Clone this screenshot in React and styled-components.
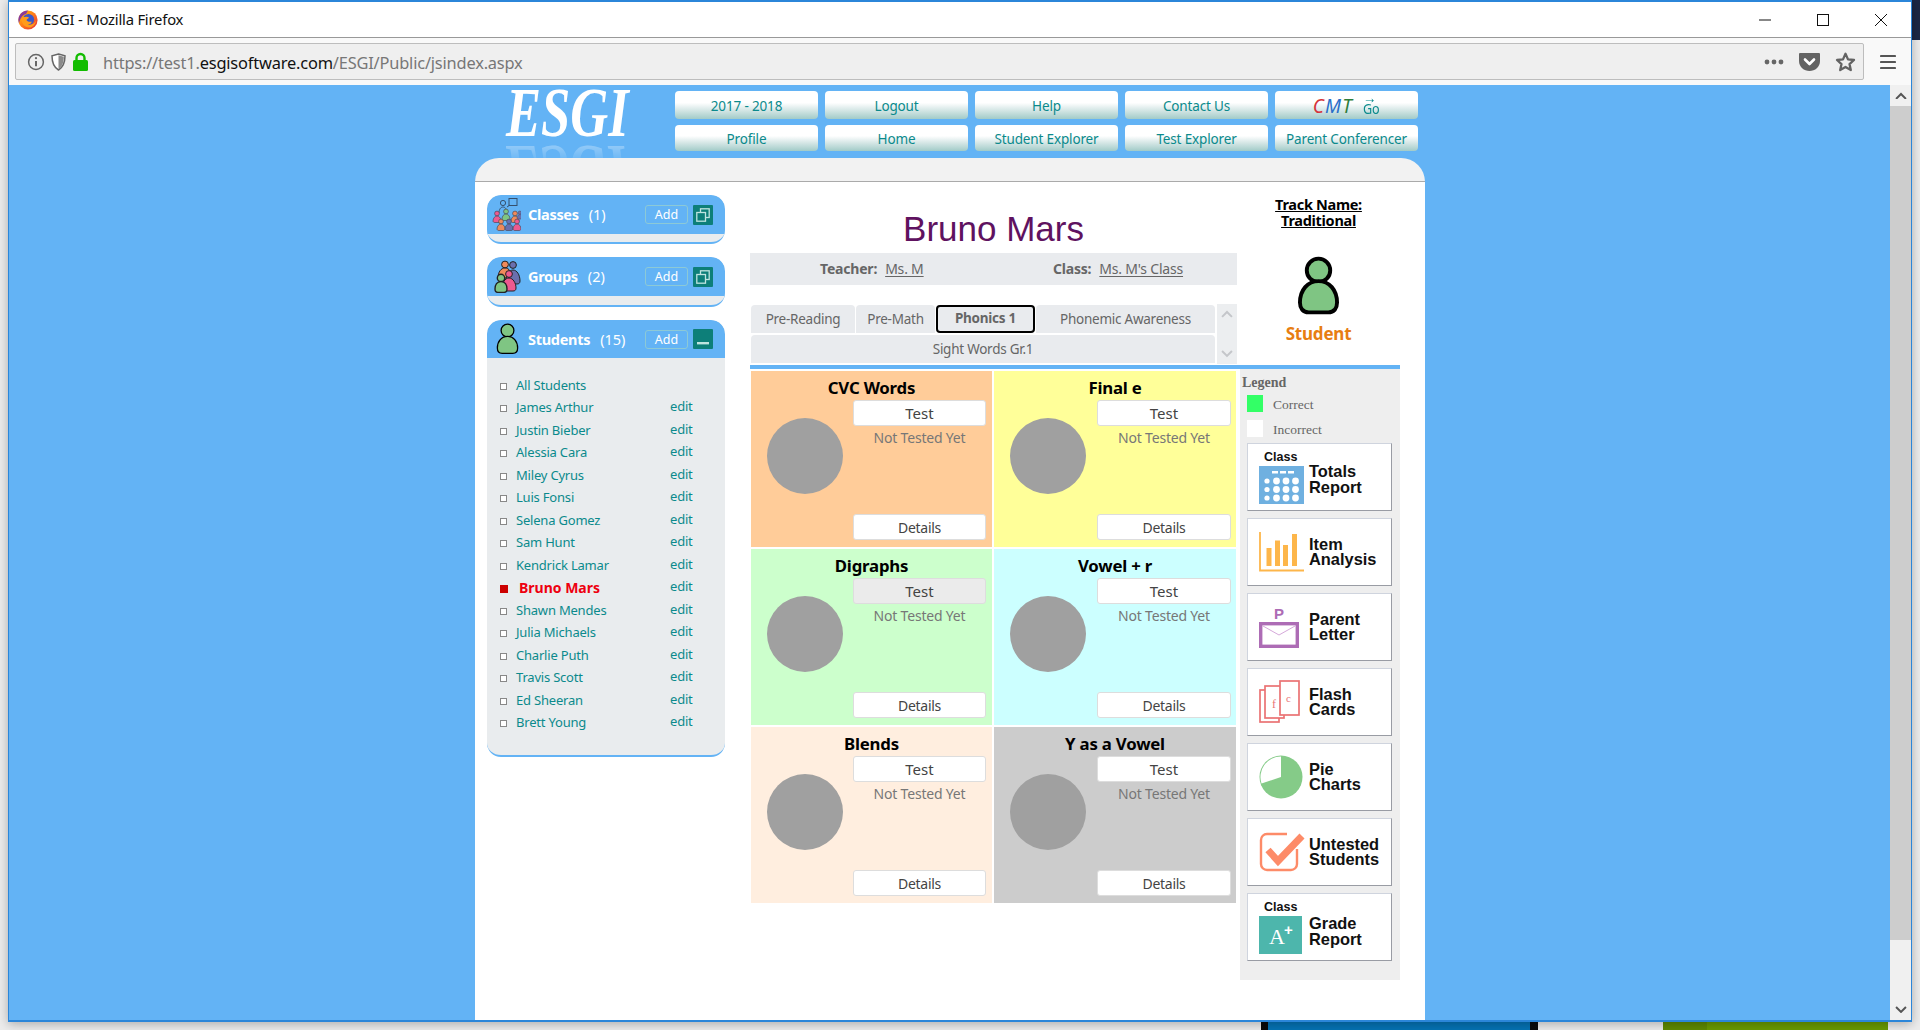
import React from 'react';
import styled, { createGlobalStyle } from 'styled-components';

const Global = createGlobalStyle`
  html, body { margin: 0; padding: 0; overflow: hidden; background: #ececec; }
  * { box-sizing: border-box; }
`;
const UI = `"Noto Sans", "Liberation Sans", sans-serif`;
const TAHOMA = `"Noto Sans", "Liberation Sans", sans-serif`;
const HELV = `"Liberation Sans", Arial, sans-serif`;
const SERIF = `"Liberation Serif", "Times New Roman", serif`;
const BLUE = '#63b3f5';
const TEAL = '#0b8a8c';

const Desktop = styled.div`
  position: relative; width: 1920px; height: 1030px; background: #ececec; overflow: hidden;
`;
const BackPiece = styled.div`
  position: absolute; bottom: 0; height: 9px; left: ${p => p.$x}px; width: ${p => p.$w}px; background: ${p => p.$c};
`;
const CornerPiece = styled.div`
  position: absolute; top: 0; right: 0; width: 8px; height: 40px; background: #1b2745;
`;
const Window = styled.div`
  position: absolute; left: 8px; top: 0; width: 1904px; height: 1022px;
  display: flex; flex-direction: column;
  border: 1px solid #2b86d9; border-width: 2px 1px 2px 1px;
  box-shadow: 0 2px 10px rgba(0,0,0,.28);
`;
const TitleBar = styled.div`
  height: 36px; flex: none; background: #fff; display: flex; align-items: center; padding-left: 9px;
  border-bottom: 1px solid #999; position: relative; z-index: 2;
`;
const TitleText = styled.div`
  font: 14.8px/1 ${UI}; color: #111; margin-left: 5px; letter-spacing: -.2px;
`;
const WinButtons = styled.div`
  margin-left: auto; display: flex; align-items: center; gap: 46px; padding-right: 24px;
`;
const Toolbar = styled.div`
  height: 47px; flex: none; background: #f9f9f9; display: flex; align-items: center; padding: 0 15px 0 6px; position: relative; z-index: 2;
`;
const UrlBar = styled.div`
  width: 1849px; height: 37px; background: #efefef; border: 1px solid #bdbdbd; border-radius: 2px;
  display: flex; align-items: center; padding: 0 7px 0 11px;
`;
const UrlIcons = styled.div`display: flex; align-items: center; gap: 6px; width: 76px;`;
const Url = styled.div`
  font: 16.4px/1 ${UI}; color: #777; letter-spacing: -.18px; white-space: nowrap; padding-top: 4px; b { font-weight: 400; color: #111; }
`;
const UrlEnd = styled.div`margin-left: auto; display: flex; align-items: center; gap: 15px;`;
const MenuSlot = styled.span`margin-left: auto; display: flex;`;
const Viewport = styled.div`flex: 1; min-height: 0; display: flex;`;
const Page = styled.div`
  flex: 1; background: ${BLUE}; padding-left: 466px; display: flex; flex-direction: column;
`;
const Scrollbar = styled.div`
  width: 21px; flex: none; background: #f0f0f0; display: flex; flex-direction: column; align-items: center; position: relative;
`;
const ScrollBtn = styled.div`height: 21px; flex: none; display: flex; align-items: center; justify-content: center; margin-top: ${p => p.$end ? 'auto' : '0'};`;
const ScrollThumb = styled.div`width: 100%; height: 834px; background: #cdcdcd;`;

const Header = styled.div`height: 73px; flex: none; display: flex; width: 950px;`;
const LogoBox = styled.div`
  width: 200px; padding: 0 0 0 31px;
`;
const Logo = styled.div`
  font: italic 700 70px/56px ${SERIF}; color: #fff; height: 56px; width: 160px; white-space: nowrap;
  transform: scaleX(.75); transform-origin: left;
  -webkit-box-reflect: below 0px linear-gradient(transparent 60%, rgba(255,255,255,.38));
`;
const NavGrid = styled.div`
  display: grid; grid-template-columns: repeat(5, 143px); grid-template-rows: 28px 26px; column-gap: 7px; row-gap: 6px; padding-top: 6px;
`;
const NavBtn = styled.div`
  border-radius: 4px; display: flex; align-items: center; justify-content: center; gap: 9px; padding-top: 3px;
  background: linear-gradient(#fff 0%, #fff 42%, #d6e7e6 68%, #a2cbc8 100%);
  font: 13.5px/1 ${TAHOMA}; color: ${TEAL}; letter-spacing: -.15px;
`;
const Cmt = styled.span`
  font: italic 400 19px/1 ${UI}; letter-spacing: 1.2px; color: #2f7d3a;
  i:nth-child(1) { color: #d6333a; } i:nth-child(2) { color: #2a6fc9; }
`;
const Go = styled.span`
  font: 14px/1 ${TAHOMA}; color: ${TEAL}; position: relative; padding-top: 5px; transform: scaleX(.9);
  &::before { content: "→"; position: absolute; top: -7px; left: 0; font-size: 15px; }
`;
const Sheet = styled.div`width: 950px; flex: 1; display: flex; flex-direction: column; position: relative; z-index: 1;`;
const SheetTop = styled.div`
  height: 24px; flex: none; background: #f2f2f2; border-bottom: 1px solid #aaa; border-radius: 24px 24px 0 0;
`;
const SheetBody = styled.div`flex: 1; display: flex; min-height: 0; background: #fff;`;

const Side = styled.div`width: 275px; flex: none; padding: 13px 0 0 12px;`;
const Panel = styled.div`
  width: 238px; margin-bottom: ${p => p.$mb}px; background: #e9ecee; border-radius: 14px; border-bottom: 2px solid ${BLUE}; overflow: hidden;
  height: ${p => p.$h}px;
`;
const PanelHead = styled.div`
  height: ${p => p.$h || 39}px; background: ${BLUE}; display: flex; align-items: center; position: relative;
  border-radius: 14px 14px 0 0;
`;
const PanelIcon = styled.div`width: 41px; flex: none; display: flex; justify-content: center;`;
const PanelTitle = styled.div`
  font: 700 14.5px/1 ${TAHOMA}; color: #fff; letter-spacing: -.3px; span { font-weight: 400; margin-left: 10px; letter-spacing: 0; }
`;
const AddBtn = styled.div`
  margin-left: auto; width: 43px; height: 19px; border: 1px solid #8cc9d6; border-radius: 3px; color: #fff;
  font: 12.5px/17px ${TAHOMA}; text-align: center;
`;
const ToggleBtn = styled.div`
  width: 20px; height: 20px; margin: 0 12px 0 5px; background: #0d7f79; display: flex; align-items: center; justify-content: center; border-radius: 1px;
`;
const StudentList = styled.ul`list-style: none; margin: 0; padding: 16px 0 0 13px;`;
const StudentRow = styled.li`
  height: 22.5px; display: flex; align-items: center; font: 13px/1 ${TAHOMA}; letter-spacing: -.2px; color: ${TEAL};
`;
const Bullet = styled.span`
  width: 7px; height: 7px; flex: none; border: 1.5px solid #888; background: #fff; margin: 2px 9px 0 0;
`;
const ActiveBullet = styled.span`width: 8px; height: 8px; flex: none; background: #cc0000; margin: 2px 11px 0 0;`;
const ActiveName = styled.span`font-weight: 700; font-size: 14px; letter-spacing: 0; color: #ee0010;`;
const EditSlot = styled.span`margin-left: auto; width: 55px; transform: translateY(-1px);`;

const Center = styled.div`width: 487px; flex: none; display: flex; flex-direction: column;`;
const StudentName = styled.h1`
  margin: 0; height: 71px; padding-top: 29px; text-align: center; font: 400 35px/1 ${HELV}; color: #5f1260;
`;
const InfoBar = styled.div`
  height: 32px; flex: none; background: #e9ebee; display: flex; align-items: center; padding-left: 70px;
  font: 14px/1 ${TAHOMA}; color: #666; letter-spacing: -.2px;
`;
const InfoItem = styled.div`
  flex: none; width: 233px; white-space: nowrap; b { font-weight: 700; margin-right: 8px; } u { text-underline-offset: 2px; }
`;
const TabsWrap = styled.div`display: flex; margin-top: 19px; height: 61px; flex: none;`;
const TabRows = styled.div`width: 467px; padding: 1px 2px 0 1px; display: flex; flex-direction: column; gap: 2px;`;
const TabRow = styled.div`display: flex; gap: 1px; height: 28px;`;
const Tab = styled.div`
  flex: ${p => p.$w ? `0 0 ${p.$w}px` : 1}; background: #e9ebee; color: #666; padding-top: ${p => p.$on ? 0 : 2}px;
  display: flex; align-items: center; justify-content: center; font: ${p => p.$on ? 700 : 400} 13.5px/1 ${TAHOMA}; letter-spacing: -.25px;
  border: ${p => p.$on ? '2px solid #000' : 'none'};
  border-radius: ${p => p.$on ? '4px' : '4px 4px 0 0'};
`;
const TabScroll = styled.div`
  width: 20px; background: #eceef0; display: flex; flex-direction: column; justify-content: space-between; align-items: center; padding: 6px 0; height: 60px;
`;
const TilesBar = styled.div`height: 4px; flex: none; background: ${BLUE};`;
const Tiles = styled.div`
  display: grid; grid-template-columns: 241px 242px; grid-auto-rows: 176px; gap: 2px; padding: 2px 0 0 1px;
`;
const TileBox = styled.div`
  background: ${p => p.$bg}; display: grid;
  grid-template-columns: ${p => p.$right ? '103px 134px' : '102px 133px'};
  grid-template-rows: 29px 26px 1fr 26px; padding-bottom: 7px;
`;
const TileTitle = styled.div`
  grid-column: 1 / 3; font: 700 16.8px/1 ${TAHOMA}; color: #000; text-align: center; padding-top: 9px; letter-spacing: -.2px; margin-right: ${p => p.$right ? -5 : -6}px; white-space: nowrap;
`;
const Dial = styled.div`
  grid-column: 1; grid-row: 2 / 4; width: 76px; height: 76px; border-radius: 50%; background: #a0a0a0; margin: 18px 0 0 16px;
`;
const TileBtn = styled.div`
  grid-column: 2; grid-row: ${p => p.$row}; background: ${p => p.$bg || '#fff'}; border: 1px solid #ddd; border-radius: 3px; display: flex; align-items: center; justify-content: center;
  padding-top: 1px; font: ${p => p.$fs}px/1 ${TAHOMA}; color: #444; letter-spacing: ${p => p.$ls || 0}px;
`;
const NotTested = styled.div`
  grid-column: 2; grid-row: 3; text-align: center; font: 14px/1 ${TAHOMA}; color: #777; padding: 5px 0 0 0; letter-spacing: -.2px; white-space: nowrap;
`;

const Right = styled.div`flex: none; width: 163px; margin-left: 3px; display: flex; flex-direction: column;`;
const Track = styled.div`
  height: 183px; flex: none; display: flex; flex-direction: column; align-items: center; width: 157px;
`;
const TrackName = styled.div`
  font: 700 14.5px/16px ${TAHOMA}; color: #000; text-decoration: underline; text-align: center; letter-spacing: -.3px; margin-top: 14px;
`;
const Figure = styled.div`margin-top: 28px; height: 60px;`;
const Role = styled.div`font: 700 17px/1 ${TAHOMA}; color: #e77e12; margin-top: 9px; letter-spacing: -.2px;`;
const BlueCap = styled.div`height: 4px; flex: none; background: ${BLUE}; margin-left: -3px; width: 163px;`;
const LegendBox = styled.div`
  width: 160px; height: 611px; background: #eee; padding: 6px 7px 0 2px; display: flex; flex-direction: column;
`;
const LegendHead = styled.div`font: 700 14px/16px ${SERIF}; color: #666;`;
const LegendItem = styled.div`
  display: flex; align-items: center; height: 25px; padding-left: 5px; font: 13.5px/1 ${SERIF}; color: #666; &:first-of-type { margin-top: 5px; }
`;
const LegendText = styled.span`padding-top: 3px;`;
const Swatch = styled.span`width: 16px; height: 17px; background: ${p => p.$c}; margin-right: 10px;`;
const Reports = styled.div`display: flex; flex-direction: column; gap: 7px; padding: 2px 0 0 5px;`;
const Report = styled.div`
  width: 145px; height: 68px; background: #fff; border: 1px solid; border-color: #cfd4de #999ca4 #999ca4 #cfd4de;
  display: flex; align-items: center; padding-left: 11px; position: relative;
`;
const ReportIcon = styled.div`width: 50px; flex: none; display: flex; align-items: center; height: 100%;`;
const ReportLabel = styled.div`
  font: 700 16.4px/15.5px ${HELV}; color: #111; margin-top: ${p => p.$mt || 0}px; white-space: pre-line;
`;
const ClassTag = styled.div`
  position: absolute; left: 16px; top: 7px; font: 700 12.5px/1 ${HELV}; color: #111;
`;

const FirefoxIcon = () => (
  <svg width="20" height="20" viewBox="0 0 20 20">
    <defs>
      <linearGradient id="ff" x1="0" y1="0" x2="1" y2="1"><stop offset="0" stopColor="#ffcb00"/><stop offset=".5" stopColor="#ff7a1a"/><stop offset="1" stopColor="#e32a3a"/></linearGradient>
    </defs>
    <circle cx="10" cy="10" r="9.6" fill="url(#ff)"/>
    <path d="M10 .4a9.6 9.600 0 0 0-9 13C2 9 4 5 8 4z" fill="#8a3a9a"/>
    <circle cx="10.500" cy="9.500" r="5.600" fill="#3a58c9"/>
    <path d="M3 9c1 5 4 9 9 8.500 3-.5 5.500-3 6-7-1.500 3.500-5 5-8 4 2.500-.5 4-1.500 3.500-3-2 .8-4.500 0-5-1.500 1-1.500 2.500-1.500 2.500-2.500-1.500-1-3-1-4-.5C5 7 3.500 7.500 3 9z" fill="#ff9c1a"/>
  </svg>
);
const Info = () => (
  <svg width="18" height="18" viewBox="0 0 18 18" fill="none" stroke="#666" strokeWidth="1.5">
    <circle cx="9" cy="9" r="7.4"/><path d="M9 8v5.2" strokeWidth="2"/><circle cx="9" cy="5.2" r="1.1" fill="#666" stroke="none"/>
  </svg>
);
const Shield = () => (
  <svg width="15" height="18" viewBox="0 0 15 18">
    <path d="M7.5 1 14 2.8c0 6-1 11-6.500 14.200C2 14 1 8.800 1 2.800z" fill="#fff" stroke="#666" strokeWidth="1.500"/>
    <path d="M7.500 2.200 12.800 3.700c0 5-1 9.500-5.300 12z" fill="#8a8a8a"/>
  </svg>
);
const Lock = () => (
  <svg width="17" height="19" viewBox="0 0 17 19">
    <path d="M4.500 9V6a4 4 0 0 1 8 0v3" fill="none" stroke="#12bc00" strokeWidth="2.400"/>
    <rect x="1" y="8" width="15" height="11" rx="1.500" fill="#12bc00"/>
  </svg>
);
const Dots = () => (
  <svg width="20" height="6" viewBox="0 0 20 6" fill="#666"><circle cx="3" cy="3" r="2.400"/><circle cx="10" cy="3" r="2.400"/><circle cx="17" cy="3" r="2.400"/></svg>
);
const Pocket = () => (
  <svg width="21" height="18" viewBox="0 0 21 18">
    <path d="M1 0h19a1 1 0 0 1 1 1v7c0 6-5 10-10.500 10S0 14 0 8V1a1 1 0 0 1 1-1z" fill="#636363"/>
    <path d="M6 6.500 10.500 11 15 6.500" fill="none" stroke="#fff" strokeWidth="2.600" strokeLinecap="round" strokeLinejoin="round"/>
  </svg>
);
const Star = () => (
  <svg width="21" height="20" viewBox="0 0 21 20">
    <path d="M10.500 1.800 13 7.400l6 .6-4.500 4.100 1.300 6-5.300-3.100-5.300 3.100 1.300-6L2 8l6-.6z" fill="none" stroke="#636363" strokeWidth="2.300" strokeLinejoin="round"/>
  </svg>
);
const Menu = () => (
  <svg width="16" height="16" viewBox="0 0 16 16" stroke="#555" strokeWidth="2.200" strokeLinecap="round"><path d="M1 2h14M1 8h14M1 14h14"/></svg>
);
const Chevron = ({ up, color = '#555', size = 12 }) => (
  <svg width={size} height={size * .66} viewBox="0 0 12 8" fill="none" stroke={color} strokeWidth="2">
    <path d={up ? 'M1 7 6 2l5 5' : 'M1 1l5 5 5-5'}/>
  </svg>
);

const Person = ({ w, h, fill = '#7fc583', stroke = 3 }) => (
  <svg width={w} height={h} viewBox="0 0 42 60">
    <circle cx="21" cy="14" r="12" fill={fill} stroke="#000" strokeWidth={stroke + 1}/>
    <path d="M21 25c-11 0-19 9-19 22 0 6 3 10 9 10h20c6 0 9-4 9-10 0-13-8-22-19-22z" fill={fill} stroke="#000" strokeWidth={stroke + 1}/>
  </svg>
);
const mini = (x, y, c, s = 1) => (
  <g key={`${x}-${y}`} transform={`translate(${x} ${y}) scale(${s})`}>
    <circle cx="4" cy="2.500" r="2.400" fill={c} stroke="#4a4a5a" strokeWidth=".7"/>
    <path d="M0 10c0-3 2-5 4-5s4 2 4 5c0 1-1 1.500-2 1.500H2c-1 0-2-.5-2-1.500z" fill={c} stroke="#4a4a5a" strokeWidth=".7"/>
  </g>
);
const ClassesIcon = () => (
  <svg width="30" height="33" viewBox="0 0 30 33" style={{ marginLeft: -4 }}>
    <rect x="18" y="0.500" width="8" height="7" fill="none" stroke="#35506e"/>
    <path d="M16 9l3-2" stroke="#35506e"/>
    <circle cx="12" cy="5" r="2.600" fill="none" stroke="#35506e"/>
    <path d="M8 15c0-4 2-6 4-6s4 2 4 6" fill="none" stroke="#35506e"/>
    {mini(11, 11, '#7fc583')}{mini(2, 13, '#ee5a8f')}{mini(20, 13, '#f08a5a')}
    {mini(26, 13, '#6a6fae', .7)}{mini(6, 21, '#f08a5a')}{mini(14, 21, '#6a6fae')}{mini(22, 21, '#ee5a8f')}
  </svg>
);
const GroupsIcon = () => (
  <svg width="27" height="33" viewBox="0 0 27 33" stroke="#222" strokeWidth="1">
    <circle cx="11" cy="4.500" r="3.400" fill="#f08a5a"/>
    <path d="M4 18c0-6 3-10 7-10s7 4 7 10z" fill="#f08a5a"/>
    <circle cx="19" cy="5" r="3.400" fill="#6a6fae"/>
    <path d="M12 21c0-6 3-11 7-11s7 5 7 11c0 2-1 3-3 3h-8c-2 0-3-1-3-3z" fill="#6a6fae"/>
    <circle cx="15" cy="14" r="3.400" fill="#ee5a8f"/>
    <path d="M8 28c0-5 3-10 7-10s7 5 7 10c0 2-1 3-3 3h-8c-2 0-3-1-3-3z" fill="#ee5a8f"/>
    <circle cx="7" cy="18" r="3.700" fill="#7fc583" strokeWidth="1.400"/>
    <path d="M1 29c0-4 2-7.500 6-7.500s6 3.500 6 7.500c0 2-1 3.400-3 3.400H4c-2 0-3-1.400-3-3.400z" fill="#7fc583" strokeWidth="1.400"/>
  </svg>
);
const Overlap = () => (
  <svg width="14" height="14" viewBox="0 0 14 14" fill="none" stroke="#bfe4e0" strokeWidth="1.300">
    <rect x="4.500" y=".8" width="8.700" height="8.700"/><rect x=".8" y="4.500" width="8.700" height="8.700" fill="#0d7f79"/>
  </svg>
);
const Minus = () => (
  <svg width="14" height="14" viewBox="0 0 14 14"><rect x="1" y="10" width="12" height="2.400" fill="#bfe4e0"/></svg>
);

const TotalsIcon = () => (
  <svg width="46" height="38" viewBox="0 0 46 38" style={{ marginTop: 15 }}>
    <rect width="45" height="38" fill="#6fb0e0"/>
    {[0, 1, 2].map(i => <rect key={i} x={13 + i * 8} y="5" width="6" height="2.500" fill="#fff"/>)}
    {[0, 1, 2].map(r => [0, 1, 2, 3].map(c => <circle key={`${r}${c}`} cx={8 + c * 9.500} cy={15 + r * 8.500} r={c === 0 ? 2.600 : 3.400} fill="#fff"/>))}
  </svg>
);
const ItemIcon = () => (
  <svg width="45" height="40" viewBox="0 0 45 40" fill="#fdb64a">
    <path d="M1 0v38.500h44" fill="none" stroke="#fdb64a" strokeWidth="1.800"/>
    <rect x="7.500" y="16" width="5" height="18"/><rect x="16" y="8.500" width="5" height="25.500"/><rect x="24" y="13" width="5" height="21"/><rect x="33" y="2" width="5" height="32"/>
  </svg>
);
const LetterIcon = () => (
  <svg width="40" height="42" viewBox="0 0 40 42">
    <text x="15" y="13" fontFamily={HELV} fontSize="15" fontWeight="700" fill="#ad6cb5">P</text>
    <rect x="1.700" y="17.700" width="36.600" height="22.600" fill="#fff" stroke="#ad6cb5" strokeWidth="3.400"/>
    <path d="M4 20l16 9 16-9" fill="none" stroke="#d5a8da" strokeWidth="1"/>
  </svg>
);
const CardsIcon = () => (
  <svg width="42" height="44" viewBox="0 0 42 44" fill="#fff" stroke="#ea7374" strokeWidth="1.700">
    <rect x="1" y="10" width="19" height="32"/><rect x="6" y="6" width="19" height="32"/><rect x="21" y="1" width="19" height="34"/>
    <text x="13" y="28" fontFamily={SERIF} fontSize="12" fill="#ea7374" stroke="none">f</text>
    <text x="27" y="22" fontFamily={SERIF} fontSize="11" fill="#ea7374" stroke="none">c</text>
  </svg>
);
const PieIcon = () => (
  <svg width="44" height="44" viewBox="0 0 44 44">
    <circle cx="22" cy="22" r="21.500" fill="#85cb88"/>
    <path d="M22 22V1.500A20.500 20.500 0 0 0 2.500 28.500z" fill="#fff"/>
  </svg>
);
const CheckIcon = () => (
  <svg width="46" height="40" viewBox="0 0 46 40" fill="none">
    <path d="M28 2H8a6 6 0 0 0-6 6v24a6 6 0 0 0 6 6h24a6 6 0 0 0 6-6V17" stroke="#fd8b68" strokeWidth="2.400"/>
    <path d="M9 18l10 11L43 4" stroke="#fd8b68" strokeWidth="7"/>
  </svg>
);
const GradeIcon = () => (
  <svg width="44" height="38" viewBox="0 0 44 38" style={{ marginTop: 15 }}>
    <rect width="43" height="38" fill="#4db6ac"/>
    <text x="10" y="28" fontFamily={SERIF} fontSize="22" fill="#fff">A</text>
    <text x="25" y="19" fontFamily={HELV} fontSize="15" fontWeight="700" fill="#fff">+</text>
  </svg>
);

const students = ['James Arthur','Justin Bieber','Alessia Cara','Miley Cyrus','Luis Fonsi','Selena Gomez','Sam Hunt','Kendrick Lamar','Bruno Mars','Shawn Mendes','Julia Michaels','Charlie Puth','Travis Scott','Ed Sheeran','Brett Young'];
const nav = ['2017 - 2018','Logout','Help','Contact Us',null,'Profile','Home','Student Explorer','Test Explorer','Parent Conferencer'];
const tiles = [
  ['CVC Words','#ffcc99'],['Final e','#ffff99'],['Digraphs','#ccffcc'],['Vowel + r','#ccffff'],['Blends','#ffeedf'],['Y as a Vowel','#cccccc'],
];
const reports = [
  [TotalsIcon,'Totals\nReport',true,5],[ItemIcon,'Item\nAnalysis'],[LetterIcon,'Parent\nLetter'],[CardsIcon,'Flash\nCards'],[PieIcon,'Pie\nCharts'],[CheckIcon,'Untested\nStudents'],[GradeIcon,'Grade\nReport',true,9],
];

export default function App() {
  return (
    <Desktop>
      <Global/>
      <CornerPiece/>
      <BackPiece $x={1261} $w={277} $c="#0a0a0a"/>
      <BackPiece $x={1268} $w={262} $c="#0573b4"/>
      <BackPiece $x={1663} $w={44} $c="#5f8a00"/>
      <BackPiece $x={1707} $w={181} $c="#6a9a00"/>
      <Window>
        <TitleBar>
          <FirefoxIcon/>
          <TitleText>ESGI - Mozilla Firefox</TitleText>
          <WinButtons>
            <svg width="12" height="12" viewBox="0 0 12 12" stroke="#111"><path d="M0 6h12"/></svg>
            <svg width="12" height="12" viewBox="0 0 12 12" fill="none" stroke="#111"><rect x=".5" y=".5" width="11" height="11"/></svg>
            <svg width="12" height="12" viewBox="0 0 12 12" stroke="#111"><path d="M0 0l12 12M12 0 0 12"/></svg>
          </WinButtons>
        </TitleBar>
        <Toolbar>
          <UrlBar>
            <UrlIcons><Info/><Shield/><Lock/></UrlIcons>
            <Url>https://test1.<b>esgisoftware.com</b>/ESGI/Public/jsindex.aspx</Url>
            <UrlEnd><Dots/><Pocket/><Star/></UrlEnd>
          </UrlBar>
          <MenuSlot><Menu/></MenuSlot>
        </Toolbar>
        <Viewport>
          <Page>
            <Header>
              <LogoBox>
                <Logo>ESGI</Logo>
              </LogoBox>
              <NavGrid>
                {nav.map((n, i) => n ? <NavBtn key={i}>{n}</NavBtn> : (
                  <NavBtn key={i}><Cmt><i>C</i><i>M</i><i>T</i></Cmt><Go>Go</Go></NavBtn>
                ))}
              </NavGrid>
            </Header>
            <Sheet>
              <SheetTop/>
              <SheetBody>
                <Side>
                  <Panel $h={49} $mb={13}>
                    <PanelHead>
                      <PanelIcon><ClassesIcon/></PanelIcon>
                      <PanelTitle>Classes<span>(1)</span></PanelTitle>
                      <AddBtn>Add</AddBtn>
                      <ToggleBtn><Overlap/></ToggleBtn>
                    </PanelHead>
                  </Panel>
                  <Panel $h={50} $mb={13}>
                    <PanelHead>
                      <PanelIcon><GroupsIcon/></PanelIcon>
                      <PanelTitle>Groups<span>(2)</span></PanelTitle>
                      <AddBtn>Add</AddBtn>
                      <ToggleBtn><Overlap/></ToggleBtn>
                    </PanelHead>
                  </Panel>
                  <Panel $h={437} $mb={0}>
                    <PanelHead $h={38}>
                      <PanelIcon><Person w={23} h={32} stroke={1.400}/></PanelIcon>
                      <PanelTitle>Students<span>(15)</span></PanelTitle>
                      <AddBtn>Add</AddBtn>
                      <ToggleBtn><Minus/></ToggleBtn>
                    </PanelHead>
                    <StudentList>
                      <StudentRow><Bullet/>All Students</StudentRow>
                      {students.map(s => (
                        <StudentRow key={s}>
                          {s === 'Bruno Mars' ? <ActiveBullet/> : <Bullet/>}
                          {s === 'Bruno Mars' ? <ActiveName>{s}</ActiveName> : s}
                          <EditSlot>edit</EditSlot>
                        </StudentRow>
                      ))}
                    </StudentList>
                  </Panel>
                </Side>
                <Center>
                  <StudentName>Bruno Mars</StudentName>
                  <InfoBar>
                    <InfoItem><b>Teacher:</b><u>Ms. M</u></InfoItem>
                    <InfoItem><b>Class:</b><u>Ms. M's Class</u></InfoItem>
                  </InfoBar>
                  <TabsWrap>
                    <TabRows>
                      <TabRow>
                        <Tab $w={104}>Pre-Reading</Tab>
                        <Tab $w={79}>Pre-Math</Tab>
                        <Tab $w={99} $on>Phonics 1</Tab>
                        <Tab>Phonemic Awareness</Tab>
                      </TabRow>
                      <TabRow><Tab>Sight Words Gr.1</Tab></TabRow>
                    </TabRows>
                    <TabScroll>
                      <Chevron up color="#c4c6ca"/>
                      <Chevron color="#c4c6ca"/>
                    </TabScroll>
                  </TabsWrap>
                  <TilesBar/>
                  <Tiles>
                    {tiles.map(([t, c], i) => (
                      <TileBox key={t} $bg={c} $right={i % 2 === 1}>
                        <TileTitle $right={i % 2 === 1}>{t}</TileTitle>
                        <Dial/>
                        <TileBtn $row={2} $fs={15} $bg={i === 2 ? '#ebebeb' : undefined}>Test</TileBtn>
                        <NotTested>Not Tested Yet</NotTested>
                        <TileBtn $row={4} $fs={14} $ls={-.3}>Details</TileBtn>
                      </TileBox>
                    ))}
                  </Tiles>
                </Center>
                <Right>
                  <Track>
                    <TrackName>Track Name:<br/>Traditional</TrackName>
                    <Figure><Person w={41} h={60}/></Figure>
                    <Role>Student</Role>
                  </Track>
                  <BlueCap/>
                  <LegendBox>
                    <LegendHead>Legend</LegendHead>
                    <LegendItem><Swatch $c="#33ff66"/><LegendText>Correct</LegendText></LegendItem>
                    <LegendItem><Swatch $c="#fff"/><LegendText>Incorrect</LegendText></LegendItem>
                    <Reports>
                      {reports.map(([Ic, label, cls, mt]) => (
                        <Report key={label}>
                          {cls && <ClassTag>Class</ClassTag>}
                          <ReportIcon><Ic/></ReportIcon>
                          <ReportLabel $mt={mt}>{label}</ReportLabel>
                        </Report>
                      ))}
                    </Reports>
                  </LegendBox>
                </Right>
              </SheetBody>
            </Sheet>
          </Page>
          <Scrollbar>
            <ScrollBtn><Chevron up/></ScrollBtn>
            <ScrollThumb/>
            <ScrollBtn $end><Chevron/></ScrollBtn>
          </Scrollbar>
        </Viewport>
      </Window>
    </Desktop>
  );
}
